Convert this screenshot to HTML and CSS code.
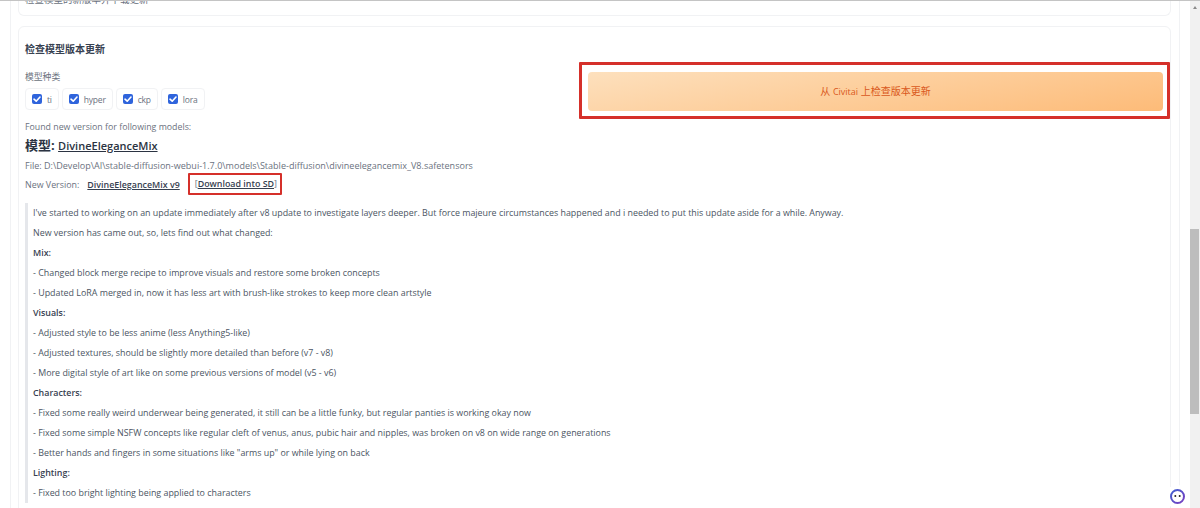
FILE: index.html
```html
<!DOCTYPE html>
<html lang="en">
<head>
    <meta charset="UTF-8">
    <meta name="viewport" content="width=device-width, initial-scale=1.0">
    <title>Civitai Helper</title>
    <link rel="stylesheet" href="styles.css">
</head>
<body>
    <div class="main-content">
        <div class="panel">
            <div class="card card-top">
                <p class="cut-text">检查模型的新版本并下载更新</p>
            </div>
            <div class="card card-check">
                <h3 class="card-title">检查模型版本更新</h3>
                <div class="check-row">
                    <div class="check-form">
                        <div class="field-label">模型种类</div>
                        <div class="check-group">
                            <label class="check-item"><span class="check-box"><svg width="10" height="10" viewBox="0 0 10 10" fill="none" stroke="#fff" stroke-width="1.6" stroke-linecap="round" stroke-linejoin="round"><polyline points="2,5.2 4.2,7.2 8,3"></polyline></svg></span>ti</label>
                            <label class="check-item"><span class="check-box"><svg width="10" height="10" viewBox="0 0 10 10" fill="none" stroke="#fff" stroke-width="1.6" stroke-linecap="round" stroke-linejoin="round"><polyline points="2,5.2 4.2,7.2 8,3"></polyline></svg></span>hyper</label>
                            <label class="check-item"><span class="check-box"><svg width="10" height="10" viewBox="0 0 10 10" fill="none" stroke="#fff" stroke-width="1.6" stroke-linecap="round" stroke-linejoin="round"><polyline points="2,5.2 4.2,7.2 8,3"></polyline></svg></span>ckp</label>
                            <label class="check-item"><span class="check-box"><svg width="10" height="10" viewBox="0 0 10 10" fill="none" stroke="#fff" stroke-width="1.6" stroke-linecap="round" stroke-linejoin="round"><polyline points="2,5.2 4.2,7.2 8,3"></polyline></svg></span>lora</label>
                        </div>
                    </div>
                    <div class="highlight-box">
                        <button class="check-button">从 <span class="latin">Civitai</span> 上检查版本更新</button>
                    </div>
                </div>
                <p class="found-text">Found new version for following models:</p>
                <h2 class="model-title">模型: <a href="#">DivineEleganceMix</a></h2>
                <p class="file-path">File: D:\Develop\AI\stable-diffusion-webui-1.7.0\models\Stable-diffusion\divineelegancemix_V8.safetensors</p>
                <div class="version-row">
                    <span>New Version:</span>
                    <a class="version-link" href="#">DivineEleganceMix v9</a>
                    <span class="download-box">[<a href="#">Download into SD</a>]</span>
                </div>
                <blockquote class="notes">
                    <p>I've started to working on an update immediately after v8 update to investigate layers deeper. But force majeure circumstances happened and i needed to put this update aside for a while. Anyway.</p>
                    <p>New version has came out, so, lets find out what changed:</p>
                    <p><strong>Mix:</strong></p>
                    <p>- Changed block merge recipe to improve visuals and restore some broken concepts</p>
                    <p>- Updated LoRA merged in, now it has less art with brush-like strokes to keep more clean artstyle</p>
                    <p><strong>Visuals:</strong></p>
                    <p>- Adjusted style to be less anime (less Anything5-like)</p>
                    <p>- Adjusted textures, should be slightly more detailed than before (v7 - v8)</p>
                    <p>- More digital style of art like on some previous versions of model (v5 - v6)</p>
                    <p><strong>Characters:</strong></p>
                    <p>- Fixed some really weird underwear being generated, it still can be a little funky, but regular panties is working okay now</p>
                    <p>- Fixed some simple NSFW concepts like regular cleft of venus, anus, pubic hair and nipples, was broken on v8 on wide range on generations</p>
                    <p>- Better hands and fingers in some situations like "arms up" or while lying on back</p>
                    <p><strong>Lighting:</strong></p>
                    <p>- Fixed too bright lighting being applied to characters</p>
                </blockquote>
            </div>
        </div>
    </div>

    <div class="scrollbar">
        <div class="scroll-arrow"></div>
        <div class="scroll-thumb"></div>
    </div>

    <div class="helper-bubble">
        <svg width="17" height="17" viewBox="0 0 17 17">
            <defs>
                <linearGradient id="ring" x1="0" y1="0" x2="1" y2="1">
                    <stop offset="0" stop-color="#3f5fd0"></stop>
                    <stop offset="1" stop-color="#7a3fc0"></stop>
                </linearGradient>
            </defs>
            <circle cx="8.5" cy="8.5" r="6.5" fill="#fff" stroke="url(#ring)" stroke-width="2"></circle>
            <circle cx="6.3" cy="8" r="1" fill="#222"></circle>
            <circle cx="10.7" cy="8" r="1" fill="#222"></circle>
        </svg>
    </div>
</body>
</html>
```

FILE: styles.css
```css
:root {
    --text-primary: #374151;
    --text-secondary: #6b7280;
    --text-body: #4b5563;
    --border-color: #f1f2f4;
    --highlight: #d5302a;
}

* {
    margin: 0;
    padding: 0;
    box-sizing: border-box;
    font-family: "Open Sans", "Noto Sans CJK SC", sans-serif;
}

body {
    background-color: #ffffff;
    color: var(--text-primary);
    height: 508px;
    display: flex;
    overflow: hidden;
    border-top: 1px solid #c4c4c4;
    font-size: 10px;
}

.main-content {
    flex: 1;
    min-width: 0;
    padding: 0 10px;
}

.panel {
    height: 100%;
    padding: 0 8px 0 7px;
    border-left: 1px solid var(--border-color);
    border-right: 1px solid var(--border-color);
    overflow: hidden;
}

.card {
    border: 1px solid var(--border-color);
    border-radius: 6px;
}

.card-top {
    height: 15px;
    margin-bottom: 10px;
    border-top: none;
    border-top-left-radius: 0;
    border-top-right-radius: 0;
    padding: 0 0 10px 6px;
    overflow: hidden;
    display: flex;
    align-items: flex-end;
}

.cut-text {
    flex: none;
    line-height: 10px;
    font-size: 9.5px;
    color: var(--text-secondary);
}

.card-check {
    padding: 14px 0 0 6px;
    height: 600px;
}

.card-title {
    font-size: 10px;
    line-height: 16px;
    font-weight: 700;
    color: var(--text-primary);
}

.check-row {
    display: flex;
    justify-content: space-between;
    align-items: flex-start;
    margin-top: 5px;
}

.check-form {
    padding-top: 9px;
}

.field-label {
    font-size: 8.8px;
    line-height: 13px;
    color: var(--text-secondary);
}

.check-group {
    display: flex;
    gap: 3px;
    margin-top: 4px;
}

.check-item {
    display: flex;
    align-items: center;
    gap: 5px;
    height: 22px;
    padding: 0 6px;
    border: 1px solid var(--border-color);
    border-radius: 4px;
    font-size: 8.5px;
    letter-spacing: -0.2px;
    color: var(--text-secondary);
}

.check-box {
    width: 10px;
    height: 10px;
    border-radius: 2px;
    background: #2f64dc;
    display: flex;
    align-items: center;
    justify-content: center;
}

.highlight-box {
    width: 591px;
    height: 57px;
    padding: 7px 4px 5px 6px;
    border: 3px solid var(--highlight);
    border-radius: 1px;
}

.check-button {
    width: 100%;
    height: 39px;
    padding-bottom: 3px;
    border: none;
    border-radius: 4px;
    background: linear-gradient(170deg, #fde0bd, #fdbb78);
    color: #d9581c;
    font-size: 10px;
}

.check-button .latin {
    font-size: 9px;
}

.found-text {
    font-size: 8.8px;
    line-height: 13px;
    margin-top: 2px;
    color: var(--text-secondary);
}

.model-title {
    font-size: 13px;
    line-height: 20px;
    margin-top: 1px;
    font-weight: 700;
    color: #2b3342;
}

.model-title a {
    font-size: 11px;
    font-weight: 600;
}

a {
    color: inherit;
}

.file-path {
    font-size: 9.04px;
    line-height: 14px;
    margin-top: 3px;
    color: var(--text-secondary);
}

.version-row {
    display: flex;
    align-items: center;
    height: 22px;
    font-size: 8.9px;
    color: var(--text-secondary);
}

.version-link {
    font-weight: 600;
    color: var(--text-primary);
    margin-left: 8px;
}

.download-box {
    margin-left: 8px;
    height: 22px;
    line-height: 17px;
    padding: 0 3px 0 5px;
    border: 2px solid var(--highlight);
    border-radius: 1px;
}

.download-box a {
    font-weight: 600;
    color: var(--text-primary);
}

.notes {
    margin-top: 8px;
    padding-left: 5px;
    border-left: 3px solid #e5e7eb;
}

.notes p {
    font-size: 8.88px;
    line-height: 20px;
    color: var(--text-body);
}

.notes strong {
    font-weight: 600;
    color: var(--text-primary);
}

.scrollbar {
    width: 10px;
    background: #f1f1f1;
    display: flex;
    flex-direction: column;
    align-items: center;
}

.scroll-arrow {
    width: 0;
    height: 0;
    margin-top: 5px;
    border-left: 2px solid transparent;
    border-right: 2px solid transparent;
    border-bottom: 3px solid #8a8a8a;
}

.scroll-thumb {
    width: 9px;
    align-self: flex-start;
    height: 185px;
    margin-top: 220px;
    background: #bdbdbd;
}

.helper-bubble {
    position: absolute;
    right: 11px;
    bottom: 0;
    width: 24px;
    height: 23px;
    border-radius: 50%;
    background: #ffffff;
    display: flex;
    align-items: center;
    justify-content: center;
}
```
